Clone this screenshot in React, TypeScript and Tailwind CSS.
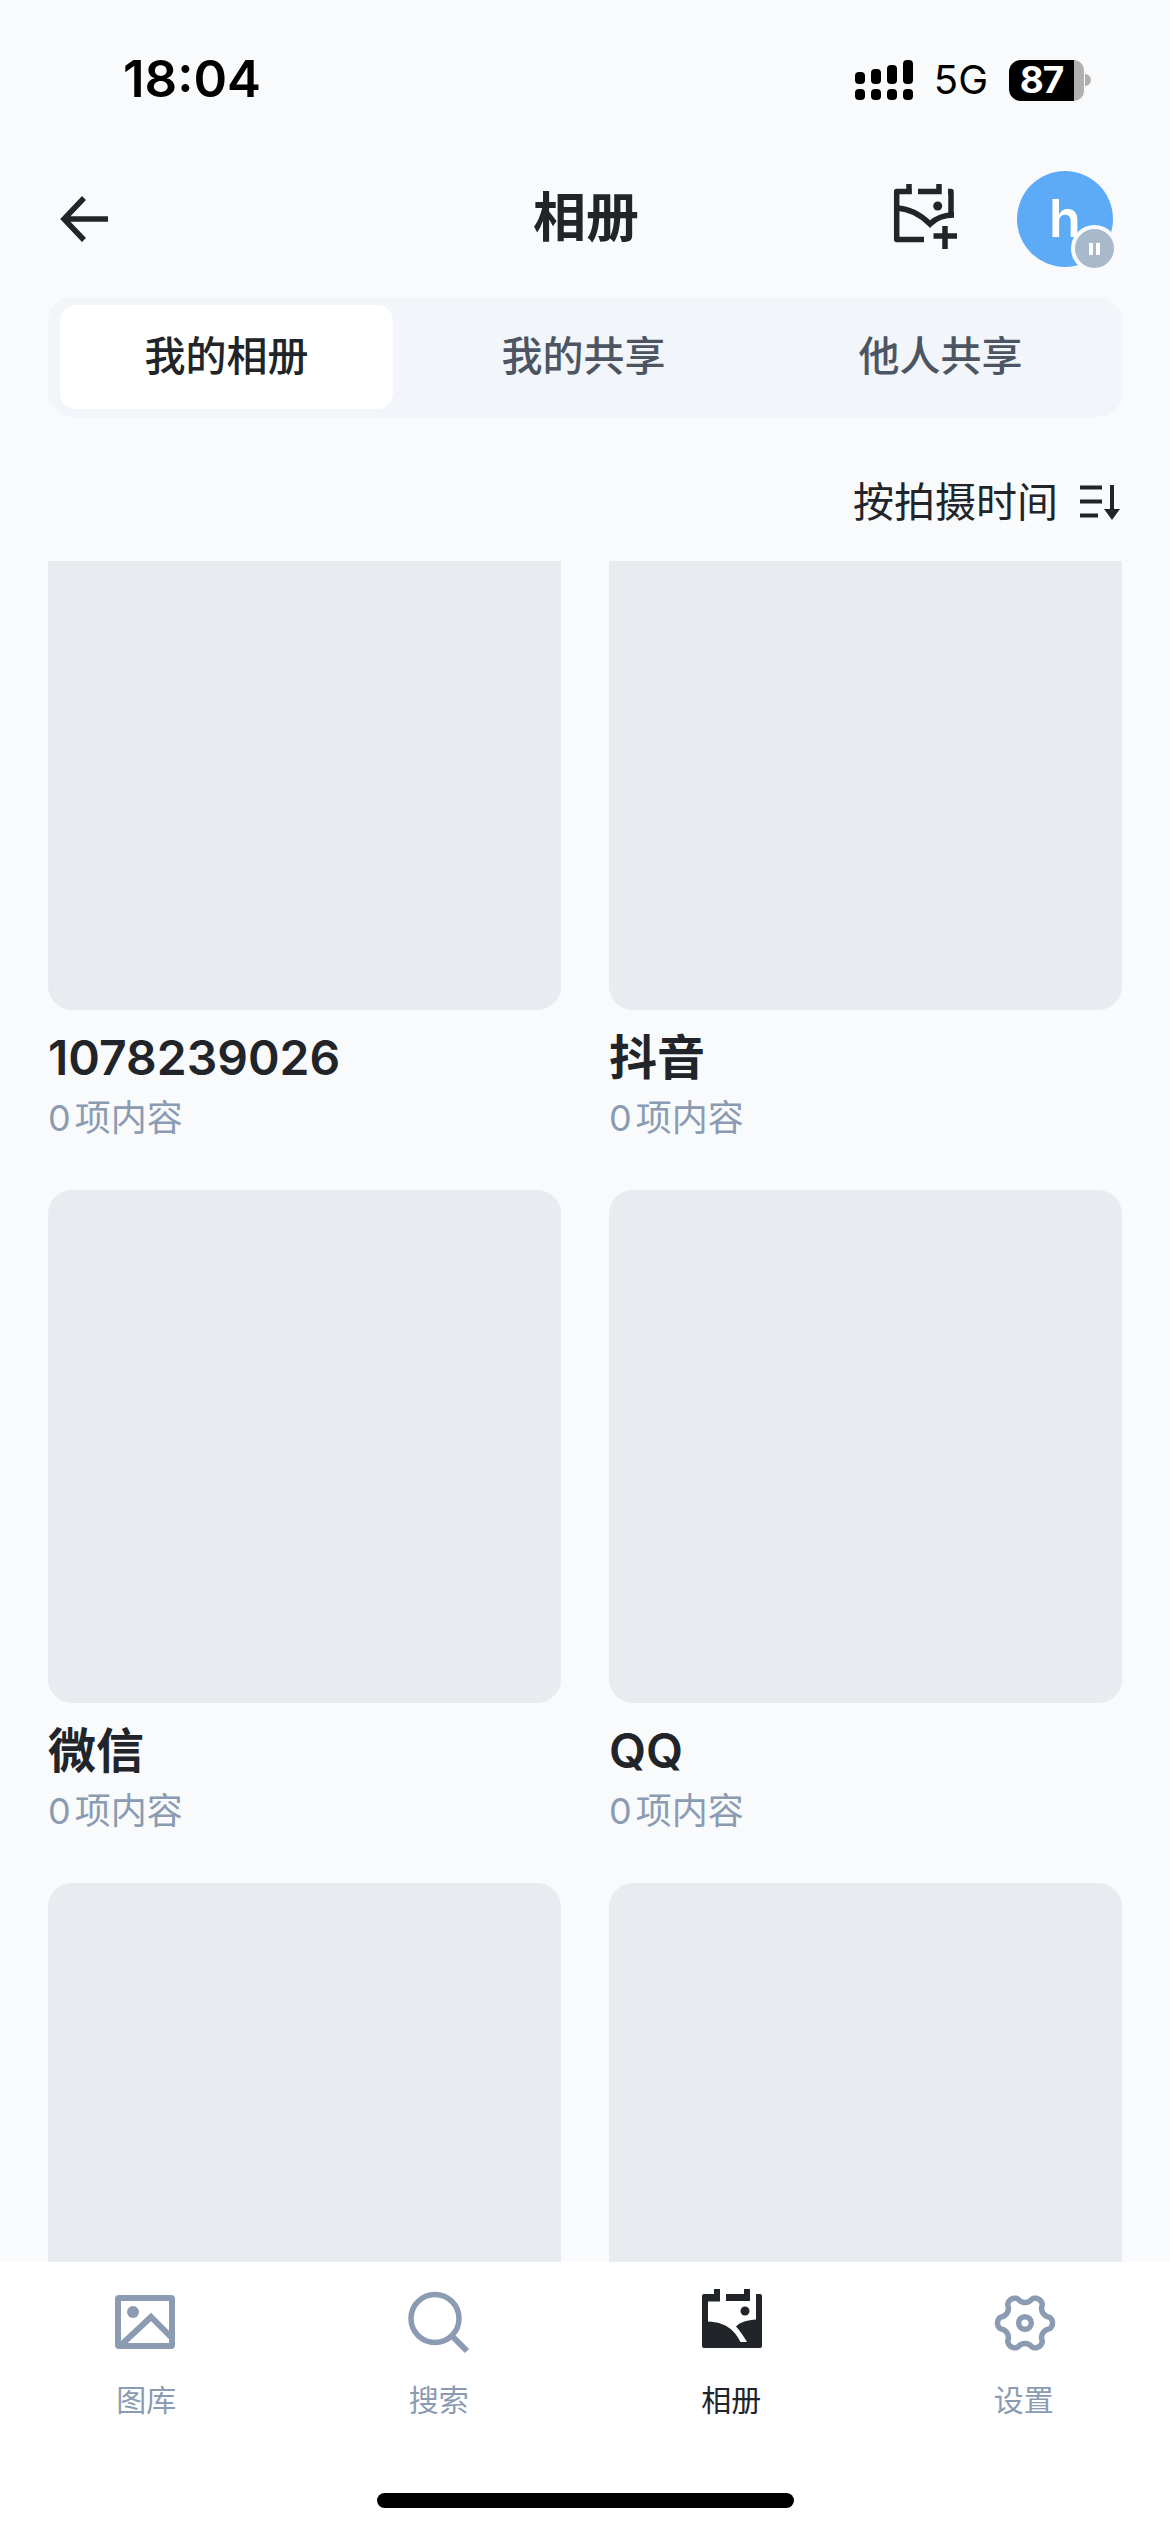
const sans = "font-['Inter','Noto_Sans_CJK_SC',sans-serif]";
const muted = "#8a9bb2";
const dark = "#212429";

const albums = ["1078239026", "抖音", "微信", "QQ", "", ""];

function BackIcon() {
  return (
    <svg width="50" height="48" viewBox="0 0 50 48" fill="none" className="block">
      <path d="M25 3L5 24L25 45M5 24H49" stroke={dark} strokeWidth="5.5" />
    </svg>
  );
}

function AlbumAddIcon() {
  return (
    <svg width="90" height="90" viewBox="0 0 90 90" fill="none" className="block">
      <g stroke={dark} strokeWidth="5.5">
        <path d="M31.5 17.5H16.7V65.5H44" strokeLinejoin="round" />
        <path d="M29 10V20M59 10V20M38 17.5H61.5M68 17.5H71V42" strokeLinejoin="round" />
        <path d="M17 34C32 35 42 42 50 50C55 45 62 41 74 41" />
        <path d="M65 52V75M53.5 62H77" />
      </g>
      <circle cx="57.7" cy="32" r="4.5" fill={dark} />
    </svg>
  );
}

function LibraryIcon() {
  return (
    <svg width="80" height="80" viewBox="0 0 80 80" fill="none">
      <g transform="translate(9 15)">
        <rect x="3" y="3" width="54" height="48" rx="1" stroke={muted} strokeWidth="6" />
        <circle cx="18" cy="17" r="6" fill={muted} />
        <path d="M5 51L36 22L57 43" stroke={muted} strokeWidth="6" />
      </g>
    </svg>
  );
}

function SearchIcon() {
  return (
    <svg width="80" height="80" viewBox="0 0 80 80" fill="none">
      <g transform="translate(9 12)">
        <circle cx="27" cy="26.5" r="24" stroke={muted} strokeWidth="5.5" />
        <path d="M44 44L59 59" stroke={muted} strokeWidth="6" />
      </g>
    </svg>
  );
}

function AlbumIcon() {
  return (
    <svg width="85" height="80" viewBox="0 0 85 80">
      <g transform="translate(1 0)">
        <rect x="12" y="14" width="60" height="54" rx="2" fill={dark} />
        <path
          d="M18 21.5H30V14H36V21H60V14H66V39.5C58 40 50 42 46 46.5C50 51 54 57 57 62H50.5C46 53 38 42 18 41.5Z"
          fill="#fff"
        />
        <rect x="24" y="9" width="6" height="12" fill={dark} />
        <rect x="54" y="9" width="6" height="12" fill={dark} />
        <circle cx="55" cy="31" r="4.5" fill={dark} />
      </g>
    </svg>
  );
}

// six lobes round a centre, flatter on top than a plain sine
function gearPath(cx: number, cy: number) {
  const points: string[] = [];
  for (let i = 0; i < 144; i++) {
    const t = (i / 144) * Math.PI * 2;
    const c = Math.cos(6 * t);
    const r = 24 + 3.5 * Math.sign(c) * Math.pow(Math.abs(c), 0.6);
    points.push(`${(cx + r * Math.cos(t)).toFixed(2)} ${(cy + r * Math.sin(t)).toFixed(2)}`);
  }
  return `M${points.join("L")}Z`;
}

function GearIcon() {
  return (
    <svg width="80" height="80" viewBox="0 0 80 80" fill="none">
      <path d={gearPath(41, 43)} stroke={muted} strokeWidth="5.5" strokeLinejoin="round" />
      <circle cx="41" cy="43" r="6.3" stroke={muted} strokeWidth="5.5" />
    </svg>
  );
}

function SignalIcon() {
  const heights = [12, 15, 19, 24];
  return (
    <div className="flex items-end gap-[6px]">
      {heights.map((h) => (
        <div key={h} className="flex w-[10px] flex-col gap-[5px]">
          <div className="w-full rounded-[4px] bg-black" style={{ height: h }} />
          <div className="h-[11px] w-full rounded-[4px] bg-black" />
        </div>
      ))}
    </div>
  );
}

function Tab({ label, active }: { label: string; active?: boolean }) {
  return (
    <div
      className={
        active
          ? "flex h-[104px] w-[333px] items-center justify-center rounded-[16px] bg-white text-[41px] font-medium text-[#212429]"
          : "flex h-[104px] w-[333px] items-center justify-center text-[41px] font-medium text-[#4d5563]"
      }
    >
      {label}
    </div>
  );
}

function NavItem({ label, active, children }: { label: string; active?: boolean; children: React.ReactNode }) {
  return (
    <div className="flex flex-col items-center">
      <div className="flex h-[80px] items-center justify-center">{children}</div>
      <span className={active ? "mt-[20px] text-[30px] leading-[40px] text-[#212429]" : "mt-[20px] text-[30px] leading-[40px] text-[#8a9bb2]"}>
        {label}
      </span>
    </div>
  );
}

export default function App() {
  return (
    <div className={`${sans} flex h-[2532px] w-[1170px] flex-col overflow-hidden bg-[#f9fafc] text-[#212429]`}>
      {/* Status bar */}
      <div className="flex h-[157px] shrink-0 items-start justify-between pl-[123px] pr-[79px] pt-[49px]">
        <span className="text-[51px] font-semibold leading-[60px] text-black">18:04</span>
        <div className="flex items-center pt-[8px]">
          <SignalIcon />
          <span className="ml-[21px] text-[40px] leading-[46px] text-black">5G</span>
          <div className="ml-[21px] flex h-[41px] w-[65px] items-center justify-center rounded-l-[12px] bg-black text-[37px] font-bold tracking-[-1px] text-white">87</div>
          <div className="h-[41px] w-[10px] rounded-r-[12px] bg-[#b0b0b0]" />
          <div className="ml-[1px] h-[12px] w-[6px] rounded-r-full bg-[#b0b0b0]" />
        </div>
      </div>

      {/* Header */}
      <div className="grid h-[124px] shrink-0 grid-cols-[1fr_auto_1fr] items-center pl-[59px] pr-[57px]">
        <BackIcon />
        <span className="text-[53px] font-bold">相册</span>
        <div className="flex items-center justify-end gap-[47px]">
          <AlbumAddIcon />
          <div className="relative flex h-[96px] w-[96px] items-center justify-center rounded-full bg-[#5dabf6] text-[52px] font-semibold text-white">
            h
            <div className="absolute bottom-[-5px] right-[-5px] flex h-[47px] w-[47px] items-center justify-center gap-[3px] rounded-full border-[4px] border-[#f9fafc] bg-[#a9b9cc]">
              <div className="h-[12px] w-[4px] bg-white" />
              <div className="h-[12px] w-[4px] bg-white" />
            </div>
          </div>
        </div>
      </div>

      {/* Tabs */}
      <div className="mx-[48px] mt-[16px] flex h-[120px] shrink-0 items-center gap-[24px] rounded-[24px] bg-[#f2f5f9] px-[12px]">
        <Tab label="我的相册" active />
        <Tab label="我的共享" />
        <Tab label="他人共享" />
      </div>

      {/* Sort */}
      <div className="flex h-[144px] shrink-0 items-center justify-end gap-[22px] pr-[50px] pt-[28px] text-[41px]">
        <span>按拍摄时间</span>
        <svg width="40" height="36" viewBox="0 0 40 36" fill="none">
          <path d="M0 2.5H22M0 16.5H22M0 30.5H18" stroke={dark} strokeWidth="4" />
          <path d="M32 0V26" stroke={dark} strokeWidth="4" />
          <path d="M24 24H40L32 35Z" fill={dark} />
        </svg>
      </div>

      {/* Album grid */}
      <div className="min-h-0 flex-1 overflow-hidden">
        <div className="mx-[48px] mt-[-64px] grid grid-cols-2 gap-x-[48px]">
          {albums.map((name, i) => (
            <div key={i} className="h-[693px]">
              <div className="h-[513px] rounded-[24px] bg-[#e8ebf0]" />
              {name && (
                <>
                  <div className="mt-[18px] text-[48px] font-semibold leading-[60px]">{name}</div>
                  <div className="mt-[5px] text-[36px] leading-[50px] text-[#8a9bb2] [word-spacing:-6px]">0 项内容</div>
                </>
              )}
            </div>
          ))}
        </div>
      </div>

      {/* Bottom nav */}
      <div className="flex h-[270px] shrink-0 flex-col bg-white">
        <div className="grid grid-cols-4 pt-[18px]">
          <NavItem label="图库"><LibraryIcon /></NavItem>
          <NavItem label="搜索"><SearchIcon /></NavItem>
          <NavItem label="相册" active><AlbumIcon /></NavItem>
          <NavItem label="设置"><GearIcon /></NavItem>
        </div>
        <div className="mx-auto mt-[73px] h-[15px] w-[417px] rounded-full bg-black" />
      </div>
    </div>
  );
}
